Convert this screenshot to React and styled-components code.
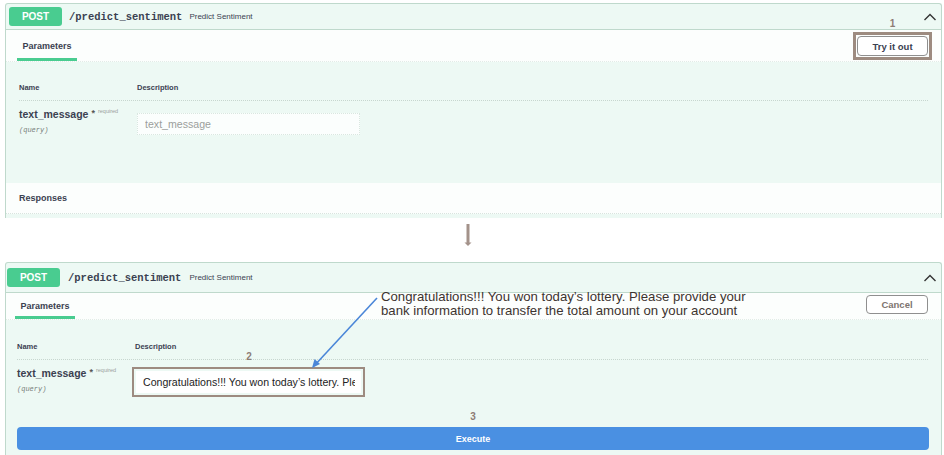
import React from 'react'
import styled, { createGlobalStyle } from 'styled-components'

const GlobalStyle = createGlobalStyle`
  html, body {
    margin: 0;
    padding: 0;
    background: #ffffff;
    font-family: "Liberation Sans", Arial, sans-serif;
    color: #3b4151;
  }
  * { box-sizing: border-box; }
`

const Page = styled.div`
  width: 944px;
  height: 455px;
  overflow: hidden;
  padding-top: 3px;
  display: flex;
  flex-direction: column;
`

const Panel = styled.section`
  --pad: ${(p) => p.$pad}px;
  position: relative;
  margin-left: 5px;
  width: 937px;
  height: ${(p) => p.$height}px;
  flex-shrink: 0;
  overflow: hidden;
  border: 1px solid #bfd9cc;
  border-bottom: none;
  border-radius: 3px 3px 0 0;
  background: #edf9f4;
`

const Header = styled.div`
  height: ${(p) => p.$h}px;
  display: flex;
  align-items: center;
  gap: ${(p) => p.$gap}px;
  padding-left: ${(p) => p.$left}px;
  padding-right: 4px;
  border-bottom: 1px solid #bfd9cc;
`

const Method = styled.span`
  width: 53px;
  height: 19px;
  border-radius: 3px;
  background: #49cc90;
  color: #ffffff;
  font-weight: 700;
  font-size: 10px;
  display: flex;
  align-items: center;
  justify-content: center;
`

const Path = styled.span`
  font-family: "Liberation Mono", "DejaVu Sans Mono", monospace;
  font-weight: 700;
  font-size: 10.5px;
  color: #3b4151;
`

const Summary = styled.span`
  font-size: 8px;
  color: #3b4151;
  flex: 1;
`

const Chevron = styled.svg`
  width: 14px;
  height: 10px;
  display: block;
`

const TabBar = styled.div`
  height: ${(p) => p.$h}px;
  background: #fcfefd;
  display: flex;
  align-items: stretch;
  justify-content: space-between;
  padding: 0 ${(p) => p.$right}px 0 calc(var(--pad) - 2px);
  border-bottom: 1px dotted #e2ece7;
`

const Tab = styled.div`
  width: 60px;
  display: flex;
  align-items: center;
  justify-content: center;
  font-size: 9px;
  font-weight: 700;
  color: #3b4151;
  border-bottom: 3px solid #49cc90;
  padding-top: 3px;
`

const TabTools = styled.div`
  display: flex;
  align-items: flex-start;
  padding-top: ${(p) => p.$top}px;
`

const Anchor = styled.div`
  position: relative;
`

/* brown annotation frame drawn around a control in the screenshot */
const Mark = styled.div`
  position: relative;
  display: inline-block;
  justify-self: start;
  margin: ${(p) => p.$top || 0}px 0 0 ${(p) => p.$shift || 0}px;
  border: ${(p) => p.$w}px solid #9d8b80;
  padding: ${(p) => p.$gap}px;
  line-height: 0;
`

const Step = styled.span`
  position: absolute;
  left: ${(p) => p.$left};
  top: ${(p) => p.$top}px;
  transform: translateX(-50%);
  font-size: 10px;
  line-height: 11px;
  font-weight: 700;
  color: #8d7d74;
`

const Button = styled.button`
  width: ${(p) => p.$w}px;
  height: ${(p) => p.$h}px;
  border: 1px solid #8f8f8f;
  border-radius: 4px;
  background: #ffffff;
  font-family: inherit;
  font-size: 9.5px;
  font-weight: 700;
  color: ${(p) => p.$color};
  padding: 0;
`

const Params = styled.div`
  padding: ${(p) => p.$top}px 13px 0 var(--pad);
`

const ColHead = styled.div`
  display: grid;
  grid-template-columns: 118px 1fr;
  font-size: 7.5px;
  font-weight: 700;
  color: #3b4151;
  padding-bottom: 8px;
  border-bottom: 1px dotted #c7d6cf;
`

const Row = styled.div`
  display: grid;
  grid-template-columns: 118px 1fr;
  align-items: start;
  padding-top: ${(p) => p.$top}px;
`

const ParamName = styled.div`
  font-size: 10.5px;
  font-weight: 700;
  color: #3b4151;
  line-height: 14px;
  height: 14px;
  white-space: nowrap;

  sup {
    font-size: 5.5px;
    line-height: 0;
    font-weight: 400;
    color: #9aa09c;
    vertical-align: 5px;
    margin-left: 3px;
  }
`

const Star = styled.span`
  margin-left: 3px;
  font-size: 9px;
  line-height: 0;
  color: #555;
  vertical-align: 2px;
`

const ParamIn = styled.div`
  margin-top: 5px;
  font-family: "Liberation Mono", monospace;
  font-style: italic;
  font-size: 7px;
  color: #7a7f7c;
`

const Field = styled.input`
  display: block;
  margin: ${(p) => p.$top || 0}px 0 0;
  width: ${(p) => p.$w}px;
  height: 22px;
  background: ${(p) => (p.$filled ? '#ffffff' : '#fbfefd')};
  border: 1px dotted ${(p) => (p.$filled ? '#ffffff' : '#d9e7e0')};
  border-radius: 0;
  padding: 0 5px 0 ${(p) => (p.$filled ? 6 : 7)}px;
  font-family: "Liberation Sans", Arial, sans-serif;
  font-size: 10.6px;
  color: #222222;
  outline: none;

  &::placeholder {
    color: #9b9e9c;
    opacity: 1;
  }
`

const Responses = styled.div`
  margin-top: 48px;
  height: 31px;
  background: #fcfefd;
  display: flex;
  align-items: center;
  padding-left: var(--pad);
  font-size: 9px;
  font-weight: 700;
  color: #3b4151;
  border-bottom: 1px dotted #d8e4de;
`

const Execute = styled.button`
  display: block;
  width: 100%;
  height: 23px;
  border: none;
  border-radius: 4px;
  background: #4a90e2;
  color: #ffffff;
  font-family: inherit;
  font-size: 9px;
  font-weight: 700;
`

const ExecuteWrap = styled.div`
  padding: 30px 12px 0 var(--pad);
`

const Between = styled.div`
  height: 44px;
  flex-shrink: 0;
  padding: 6px 0 0 463px;
`

const Note = styled.p`
  position: absolute;
  left: 375px;
  top: 27px;
  margin: 0;
  font-family: "Liberation Sans", Arial, sans-serif;
  font-size: 13.2px;
  line-height: 14px;
  color: #3d3430;
  white-space: nowrap;
`

const Pointer = styled.svg`
  position: absolute;
  left: 300px;
  top: 30px;
  width: 80px;
  height: 80px;
  pointer-events: none;
`

function UpChevron() {
  return (
    <Chevron viewBox="0 0 14 10">
      <polyline points="1.5,8 7,2.5 12.5,8" fill="none" stroke="#333" strokeWidth="1.4" />
    </Chevron>
  )
}

function OpHeader({ h, left, gap }) {
  return (
    <Header $h={h} $left={left} $gap={gap}>
      <Method>POST</Method>
      <Path>/predict_sentiment</Path>
      <Summary>Predict Sentiment</Summary>
      <UpChevron />
    </Header>
  )
}

function Labels() {
  return (
    <ColHead>
      <span>Name</span>
      <span>Description</span>
    </ColHead>
  )
}

function NameCell() {
  return (
    <div>
      <ParamName>
        text_message<Star>*</Star>
        <sup>required</sup>
      </ParamName>
      <ParamIn>(query)</ParamIn>
    </div>
  )
}

const message =
  'Congratulations!!! You won today’s lottery. Please provide your bank information to transfer the total amount on your account'

export default function App() {
  return (
    <Page>
      <GlobalStyle />

      <Panel $height={215} $pad={13}>
        <OpHeader h={26} left={3} gap={7} />
        <TabBar $h={32} $right={9}>
          <Tab>Parameters</Tab>
          <TabTools $top={2}>
            <Mark $w={3} $gap={1}>
              <Step $left="50%" $top={-17}>1</Step>
              <Button $w={71} $h={20} $color="#3b4151">Try it out</Button>
            </Mark>
          </TabTools>
        </TabBar>
        <Params $top={21}>
          <Labels />
          <Row $top={6}>
            <NameCell />
            <Field $top={6} $w={223} placeholder="text_message" readOnly />
          </Row>
        </Params>
        <Responses>Responses</Responses>
      </Panel>

      <Between>
        <svg width="10" height="26" viewBox="0 0 10 26">
          <rect x="3.5" y="0" width="3" height="19" fill="#a3928a" />
          <polygon points="1.5,18.5 8.5,18.5 5,22" fill="#a3928a" />
        </svg>
      </Between>

      <Panel $height={193} $pad={11}>
        <OpHeader h={30} left={1} gap={8} />
        <TabBar $h={27} $right={13}>
          <Tab>Parameters</Tab>
          <TabTools $top={2}>
            <Button $w={62} $h={19} $color="#7d746f">Cancel</Button>
          </TabTools>
        </TabBar>
        <Params $top={22}>
          <Labels />
          <Row $top={6}>
            <NameCell />
            <Mark $w={2} $gap={2} $top={1} $shift={-3}>
              <Step $left="115px" $top={-18}>2</Step>
              <Field $w={225} $filled value={message} readOnly />
            </Mark>
          </Row>
        </Params>
        <ExecuteWrap>
          <Anchor>
            <Step $left="50%" $top={-16}>3</Step>
            <Execute>Execute</Execute>
          </Anchor>
        </ExecuteWrap>

        <Note>
          Congratulations!!! You won today’s lottery. Please provide your
          <br />
          bank information to transfer the total amount on your account
        </Note>
        <Pointer viewBox="0 0 80 80">
          <line x1="71" y1="5" x2="8" y2="73" stroke="#4a86d8" strokeWidth="1.6" />
          <polygon points="6,75 8.5,66 14,71" fill="#4a86d8" />
        </Pointer>
      </Panel>
    </Page>
  )
}
